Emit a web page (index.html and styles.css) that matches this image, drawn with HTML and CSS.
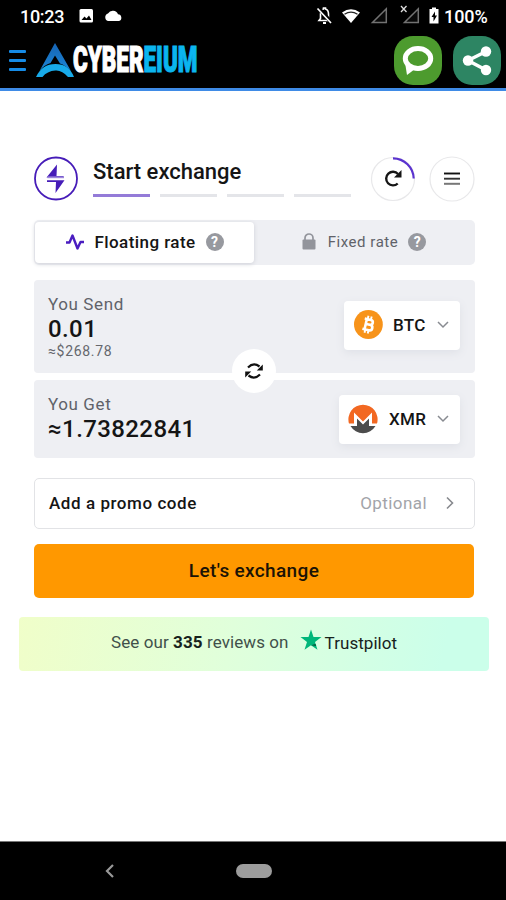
FILE: index.html
```html
<!DOCTYPE html>
<html lang="en">
<head>
<meta charset="utf-8">
<title>Cybereium</title>
<link rel="stylesheet" href="styles.css">
</head>
<body>
<div class="screen">
  <header class="top">
    <div class="status">
      <span class="clock">10:23</span>
      <svg class="st-left" width="46" height="18" viewBox="0 0 46 18">
        <rect x="1.500" y="2" width="13.500" height="13.500" rx="1.500" fill="#fff"/>
        <path d="M3.500 13l3-3.500 2 2 2.500-3L13.500 13z" fill="#000"/>
        <path d="M30 14a4 4 0 0 1 0-7.600 5.600 5.600 0 0 1 10 .8 3.500 3.500 0 0 1 1 6.800z" fill="#fff"/>
      </svg>
      <svg class="st-right" width="126" height="24" viewBox="0 0 126 24">
        <path d="M4 16.500h11l-1.500-2V10q0-4-3-5V4H8.500v1q-3 1-3 5v4.500z" fill="none" stroke="#fff" stroke-width="1.600"/>
        <path d="M8 19h3" stroke="#fff" stroke-width="2"/>
        <path d="M3.500 4l13 14.500" stroke="#000" stroke-width="4"/><path d="M2.500 4.500l13.500 14.500" stroke="#fff" stroke-width="1.700"/>
        <path d="M27 8.500q9-6.500 18 0L36 19z" fill="#fff"/><path d="M29.500 10.300q6.500-4.500 13 0" fill="none" stroke="#222" stroke-width="1.300"/>
        <path d="M57.500 18.500h13.800V4.800z M89.500 18.500h13.800V4.800z" fill="#080808" stroke="#727272" stroke-width="1.500"/>
        <path d="M86 2l5.500 6M91.500 2L86 8" stroke="#ddd" stroke-width="1.300"/>
        <path d="M114.500 5h2.500V3.500h4V5h2.500v14.500h-9z" fill="#fff"/><path d="M120 7.500l-3.500 5.500h2v4.500l3.500-6h-2z" fill="#000"/>
      </svg>
      <span class="battery">100%</span>
    </div>
    <div class="appbar">
      <div class="burger"><i></i><i></i><i></i></div>
      <svg class="logo" width="166" height="54" viewBox="0 -8 166 54">
        <defs><linearGradient id="peak" x1="0" y1="0" x2="0" y2="1"><stop offset="0" stop-color="#1764b4"/><stop offset="1" stop-color="#1b86d6"/></linearGradient></defs>
        <path d="M19 2L35 30Q29 24 24 22.500L19 14.500 14.500 22Q8 24 3.500 30z" fill="url(#peak)"/>
        <path d="M0 36Q6 23 19.500 23T38 36H32Q26 29 19.500 29.500 11 30 6.500 36z" fill="#18aae9"/>
        <text class="word" x="37" y="31.300" textLength="124.500" lengthAdjust="spacingAndGlyphs">CYBER<tspan class="blue">EIUM</tspan></text>
      </svg>
      <div class="app chat">
        <svg width="48" height="48" viewBox="0 0 48 48"><ellipse cx="24" cy="22.500" rx="12.700" ry="10" fill="none" stroke="#fff" stroke-width="5"/><path d="M11.500 29.500l1.500 9.500 8-6z" fill="#fff"/></svg>
      </div>
      <div class="app share">
        <svg width="48" height="48" viewBox="0 0 48 48"><path d="M33 15.500L15 24.500 33 34" fill="none" stroke="#fff" stroke-width="3.500"/><g fill="#fff"><circle cx="15" cy="24.500" r="5.200"/><circle cx="33" cy="15.500" r="5.200"/><circle cx="33" cy="34" r="5.200"/></g></svg>
      </div>
    </div>
  </header>

  <main class="content">
    <div class="head">
      <svg width="44" height="46" viewBox="0 0 44 46"><circle cx="22" cy="22.500" r="21" fill="#fff" stroke="#461cb8" stroke-width="1.800"/><path d="M23 8.500L12.500 21.500h17V20H22.500z" fill="#461cb8"/><path d="M13.500 21.300h16.500" stroke="#9c86dc" stroke-width="1.800"/><path d="M13 24.300h17.500L21.500 37l.5-11H13z" fill="#461cb8"/></svg>
      <div class="titlebox">
        <h1>Start exchange</h1>
        <div class="steps"><i class="on"></i><i></i><i></i><i></i></div>
      </div>
      <svg class="refresh" width="46" height="46" viewBox="0 0 46 46"><circle cx="23" cy="23" r="21.500" fill="#fff" stroke="#e8e8ea" stroke-width="1.200"/><path d="M23 2.300A20.700 20.700 0 0 1 43.700 22.500" fill="none" stroke="#5a32cf" stroke-width="2.200"/><path d="M27.700 27.500A6.800 6.800 0 1 1 28 18" fill="none" stroke="#151515" stroke-width="2.400"/><path d="M31.500 14v7.500H24z" fill="#151515"/></svg>
      <svg class="menu" width="46" height="46" viewBox="0 0 46 46"><circle cx="23" cy="23" r="22" fill="#fff" stroke="#e8e8ea" stroke-width="1.200"/><path d="M15 17.500h16" stroke="#111" stroke-width="1.900"/><path d="M15 22.700h16" stroke="#333" stroke-width="1.900"/><path d="M15 27.800h16" stroke="#777" stroke-width="2"/></svg>
    </div>

    <div class="tabs">
      <div class="tab active">
        <svg width="20" height="18" viewBox="0 0 20 18"><path d="M1 9.500h3.500L7.500 2.500l5 13L15.500 9H19" fill="none" stroke="#4a1dc0" stroke-width="2.400" stroke-linejoin="round"/></svg>
        <span>Floating rate</span><b class="help">?</b>
      </div>
      <div class="tab">
        <svg width="14" height="18" viewBox="0 0 14 18"><path d="M3 8V5a4 4 0 0 1 8 0V8" fill="none" stroke="#92949b" stroke-width="1.700"/><rect x=".5" y="6.500" width="13" height="10" rx="1" fill="#92949b"/></svg>
        <span>Fixed rate</span><b class="help">?</b>
      </div>
    </div>

    <div class="pair">
      <section class="box send">
        <div class="vals"><div class="label">You Send</div><div class="amount">0.01</div><div class="usd">≈$268.78</div></div>
        <div class="coin btc">
          <svg width="30" height="30" viewBox="0 0 30 30"><circle cx="15.400" cy="14.500" r="14.400" fill="#f7931a"/><g transform="rotate(13 15.500 14.500)" fill="none" stroke="#fff"><path d="M10.500 9.500h6.300c3.300 0 3.300 5 0 5H13M17 14.500c4 0 4 5.500 0 5.500h-6.500M12.700 9.500V20" stroke-width="2.600"/><path d="M13.500 6v4M16.800 6v4M13.500 19.500v4M16.800 19.500v4" stroke-width="1.900"/></g></svg>
          <span>BTC</span>
          <svg width="14" height="10" viewBox="0 0 14 10"><path d="M2 2l5 5 5-5" fill="none" stroke="#888b91" stroke-width="1.500"/></svg>
        </div>
      </section>
      <section class="box get">
        <div class="vals"><div class="label">You Get</div><div class="amount">≈1.73822841</div></div>
        <div class="coin xmr">
          <svg width="31" height="30" viewBox="1 0 31 30"><path d="M2 19.500A14.600 14.600 0 1 1 30 19.500H25V8.500l-9 9-9-9v11z" fill="#f26822"/><path d="M3.500 22H10v-7.500l6 6 6-6V22h6.500A14.500 14.500 0 0 1 3.500 22z" fill="#4c4c4c"/></svg>
          <span>XMR</span>
          <svg width="14" height="10" viewBox="0 0 14 10"><path d="M2 2l5 5 5-5" fill="none" stroke="#888b91" stroke-width="1.500"/></svg>
        </div>
      </section>
      <div class="swap"><svg width="20" height="18" viewBox="0 0 20 18"><path d="M4 5.500Q9.500 0 15.500 4.500M16 12.500Q10.500 18 4.500 13.500" fill="none" stroke="#111" stroke-width="2.200"/><path d="M18.800 2.500v6h-6zM1.200 15.500v-6h6z" fill="#111"/></svg></div>
    </div>

    <div class="promo"><span>Add a promo code</span><em>Optional</em><svg width="10" height="14" viewBox="0 0 10 14"><path d="M2 1.500L7.500 7 2 12.500" fill="none" stroke="#87898e" stroke-width="1.600"/></svg></div>
    <button class="go">Let's exchange</button>
  </main>
  <div class="reviews">
    <span class="lead">See our <b>335</b> reviews on</span>
    <svg width="22" height="22" viewBox="0 0 22 22"><path d="M11 .5l2.500 7.600H21.500l-6.500 4.800 2.500 7.900L11 16.200l-6.500 4.600L7 12.900.5 8.100h8z" fill="#00b67a"/><path d="M11 16.200l4.500-1.300.7 2.200z" fill="#04543a"/></svg>
    <span class="brand">Trustpilot</span>
  </div>
  <footer class="nav">
    <svg width="10" height="14" viewBox="0 0 10 14"><path d="M8 1L2 7l6 6" fill="none" stroke="#999" stroke-width="2.200"/></svg>
    <i class="pill"></i>
  </footer>
</div>
</body>
</html>
```

FILE: styles.css
```css
* { box-sizing: border-box; }
body { margin: 0; background: #fff; font-family: Roboto, "Liberation Sans", sans-serif; color: #151515; }
svg { display: block; flex: none; }
.screen { width: 506px; height: 900px; display: flex; flex-direction: column; overflow: hidden; }
.top { height: 91px; flex: none; background: #000; border-bottom: 3px solid #3f8be6; }
.status { height: 32px; display: flex; align-items: center; padding-left: 20px; color: #fff; font-size: 18px; font-weight: 500; }
.clock { width: 58px; letter-spacing: -.3px; }
.st-right { margin-left: 191px; }
.battery { margin-left: 3px; letter-spacing: -.1px; }
.appbar { height: 56px; display: flex; align-items: center; padding-left: 9px; }
.burger { width: 17px; display: grid; gap: 6px; margin-right: 10px; }
.burger i { height: 3px; background: #168be6; border-radius: 1px; }
.word { font-family: Roboto, sans-serif; font-size: 36.5px; font-weight: 900; stroke-width: 1.2px; fill: #fff; stroke: #fff; }
.blue { fill: #0bb5ef; stroke: #0bb5ef; }
.app { width: 48px; height: 49px; border-radius: 19px; }
.chat { background: #4d9b2e; margin-left: 192px; }
.share { background: #2d8563; margin-left: 11px; }
.content { padding: 65px 31px 0 34px; }
.head { display: flex; height: 46px; }
.titlebox { margin-left: 15px; width: 258px; }
h1 { margin: 2px 0 9px; font-size: 22px; line-height: 28px; height: 27px; font-weight: 500; letter-spacing: 0; white-space: nowrap; }
.steps { display: grid; grid-template-columns: repeat(4, 57px); gap: 10px; }
.steps i { height: 3px; background: #e4e5e9; }
.steps .on { background: #947bd8; }
.refresh { margin-left: 19px; }
.menu { margin-left: 13px; }
.tabs { display: flex; margin-top: 18px; height: 45px; border-radius: 5px; background: #eeeff3; padding: 2px 1px; }
.tab { flex: 1; display: flex; align-items: center; justify-content: center; padding-bottom: 1px; font-size: 15px; letter-spacing: .55px; color: #606269; }
.tab svg { margin-right: 12px; }
.tab.active { flex: 0 0 219px; background: #fff; border-radius: 4px; box-shadow: 0 1px 4px #cfd1d8; font-size: 17px; font-weight: 500; letter-spacing: .43px; color: #151515; }
.tab.active svg { margin-right: 9px; }
.help { width: 18px; height: 18px; border-radius: 50%; background: #97999f; color: #fff; font-size: 14px; line-height: 18px; text-align: center; letter-spacing: 0; margin-left: 10px; }
.pair { position: relative; margin-top: 15px; display: grid; gap: 7px; }
.box { display: flex; justify-content: space-between; padding: 0 15px 0 14px; background: #eeeff3; border-radius: 4px; }
.send { height: 93px; }
.get { height: 78px; }
.vals { padding-top: 14px; }
.label { font-size: 17px; line-height: 20px; letter-spacing: .6px; color: #606269; }
.amount { font-size: 24px; line-height: 31px; height: 30px; font-weight: 500; letter-spacing: .4px; }
.usd { font-size: 14px; line-height: 14px; letter-spacing: .7px; color: #65676d; }
.coin { height: 49px; display: flex; align-items: center; background: #fff; border-radius: 4px; box-shadow: 0 3px 9px #dfe1e7; padding: 0 10px 1px 9px; font-size: 17px; font-weight: 500; letter-spacing: .3px; }
.coin span { flex: 1; margin-left: 10px; }
.btc { width: 116px; margin-top: 21px; }
.xmr { width: 121px; margin-top: 15px; }
.swap { position: absolute; left: 198px; top: 69px; width: 44px; height: 44px; border-radius: 50%; background: #fff; display: grid; place-items: center; }
.promo { height: 51px; margin-top: 20px; border: 1px solid #e2e3e6; border-radius: 5px; display: flex; align-items: center; padding: 0 19px 1px 14px; font-size: 17px; font-weight: 500; letter-spacing: .56px; }
.promo em { margin-left: auto; margin-right: 18px; font-style: normal; font-weight: 400; letter-spacing: .42px; color: #a2a4a9; }
.go { width: 440px; height: 54px; margin-top: 15px; padding: 0 0 2px; border: 0; border-radius: 5px; background: #ff9800; font: 500 19px Roboto, sans-serif; letter-spacing: .35px; color: #1b1306; display: block; }
.reviews { width: 470px; height: 54px; flex: none; margin: 19px 0 0 19px; border-radius: 4px; background: linear-gradient(100deg, #f0fec9, #e0ffdb 45%, #cbffea 90%); display: flex; align-items: center; padding: 0 0 4px 92px; font-size: 17px; color: #41504a; white-space: nowrap; }
.lead { letter-spacing: .09px; }
.reviews span b { color: #17221c; }
.reviews svg { margin: -5px 3px 0 11px; }
.brand { color: #17221c; letter-spacing: .05px; padding-top: 1px; }
.nav { margin-top: auto; height: 59px; flex: none; background: #000; border-top: 1px solid #777; display: flex; align-items: center; padding-left: 105px; }
.pill { width: 36px; height: 14px; border-radius: 7px; background: #9c9c9c; margin-left: 121px; }
```
